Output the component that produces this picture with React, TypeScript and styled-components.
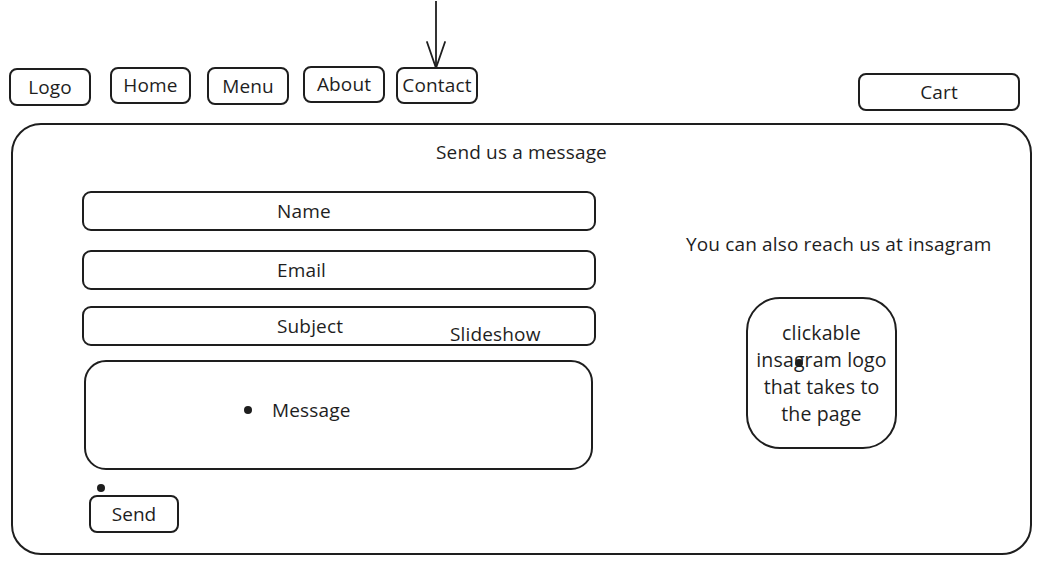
import React from 'react';
import styled, { createGlobalStyle } from 'styled-components';

const ink = '#1e1e1e';

const GlobalStyle = createGlobalStyle`
  body {
    margin: 0;
    background: #ffffff;
    color: ${ink};
    font-family: 'Open Sans', 'Noto Sans', sans-serif;
    font-size: 19px;
    letter-spacing: 0.15px;
  }
`;

// Header

const Header = styled.header`
  box-sizing: border-box;
  height: 123px;
  padding: 66px 21px 0 9px;
  display: flex;
  align-items: flex-start;
`;

const NavButton = styled.div<{ $w: number; $h: number; $left: number; $top: number }>`
  position: relative;
  box-sizing: border-box;
  width: ${(p) => p.$w}px;
  height: ${(p) => p.$h}px;
  margin-left: ${(p) => p.$left}px;
  margin-top: ${(p) => p.$top}px;
  border: 2px solid ${ink};
  border-radius: 8px;
  display: flex;
  align-items: center;
  justify-content: center;
  line-height: 1;
`;

const CartButton = styled(NavButton)`
  margin-left: auto;
`;

const Arrow = styled.svg`
  position: absolute;
  left: 28px;
  top: -68px;
`;

// Panel

const Panel = styled.main`
  box-sizing: border-box;
  width: 1021px;
  height: 432px;
  margin-left: 11px;
  border: 2px solid ${ink};
  border-radius: 30px;
  padding: 15px 0 0 69px;
`;

const Title = styled.h1`
  margin: 0 0 0 -69px;
  font-size: 19px;
  font-weight: 400;
  line-height: 24px;
  text-align: center;
`;

const Columns = styled.div`
  display: flex;
  margin-top: 27px;
`;

const FormColumn = styled.div`
  width: 514px;
  display: flex;
  flex-direction: column;
  align-items: flex-start;
`;

const Field = styled.div<{ $top: number }>`
  position: relative;
  box-sizing: border-box;
  width: 514px;
  height: 40px;
  margin-top: ${(p) => p.$top}px;
  border: 2px solid ${ink};
  border-radius: 9px;
  padding-left: 193px;
  display: flex;
  align-items: center;
`;

const StrayLabel = styled.span`
  position: absolute;
  left: 366px;
  top: 14px;
  line-height: 24px;
`;

const MessageBox = styled.div`
  box-sizing: border-box;
  width: 509px;
  height: 110px;
  margin: 14px 0 0 2px;
  border: 2px solid ${ink};
  border-radius: 22px;
  padding: 0 0 10px 158px;
  display: flex;
  align-items: center;
`;

const Bullet = styled.span<{ $gap?: number }>`
  display: inline-block;
  width: 8px;
  height: 8px;
  border-radius: 50%;
  background: ${ink};
  margin-right: ${(p) => p.$gap ?? 0}px;
`;

const SendDot = styled(Bullet)`
  margin: 14px 0 0 15px;
`;

const SendButton = styled.button`
  box-sizing: border-box;
  width: 90px;
  height: 38px;
  margin: 3px 0 0 7px;
  border: 2px solid ${ink};
  border-radius: 8px;
  background: none;
  color: ${ink};
  font: inherit;
  padding: 0;
`;

const SideColumn = styled.aside`
  margin-left: 90px;
  padding-top: 41px;
  display: flex;
  flex-direction: column;
  align-items: flex-start;
`;

const SideText = styled.p`
  margin: 0;
  line-height: 24px;
  white-space: nowrap;
`;

const InstaBox = styled.a`
  position: relative;
  box-sizing: border-box;
  width: 151px;
  height: 152px;
  margin: 41px 0 0 60px;
  border: 2px solid ${ink};
  border-radius: 34px;
  display: flex;
  align-items: center;
  justify-content: center;
  text-align: center;
  line-height: 27px;
  font-size: 19.5px;
  white-space: nowrap;
  color: ${ink};
  text-decoration: none;
`;

const InstaDot = styled(Bullet)`
  position: absolute;
  left: 47px;
  top: 60px;
`;

const navItems = [
  { label: 'Logo', w: 82, h: 38, left: 0, top: 2 },
  { label: 'Home', w: 81, h: 37, left: 19, top: 1 },
  { label: 'Menu', w: 82, h: 38, left: 16, top: 1 },
  { label: 'About', w: 82, h: 37, left: 14, top: 0 },
  { label: 'Contact', w: 82, h: 37, left: 11, top: 1 },
];

export default function App() {
  return (
    <>
      <GlobalStyle />
      <Header>
        {navItems.map((item) => (
          <NavButton key={item.label} $w={item.w} $h={item.h} $left={item.left} $top={item.top}>
            {item.label === 'Contact' && (
              <Arrow width="20" height="68" viewBox="0 0 20 68" fill="none" stroke={ink} strokeWidth="1.8" strokeLinecap="round">
                <path d="M10 0 L10 67" />
                <path d="M1 41 L10 67 L19 41" />
              </Arrow>
            )}
            {item.label}
          </NavButton>
        ))}
        <CartButton $w={162} $h={38} $left={0} $top={7}>
          Cart
        </CartButton>
      </Header>
      <Panel>
        <Title>Send us a message</Title>
        <Columns>
          <FormColumn>
            <Field $top={0}>Name</Field>
            <Field $top={19}>Email</Field>
            <Field $top={16}>
              Subject
              <StrayLabel>Slideshow</StrayLabel>
            </Field>
            <MessageBox>
              <Bullet $gap={20} />
              Message
            </MessageBox>
            <SendDot />
            <SendButton>Send</SendButton>
          </FormColumn>
          <SideColumn>
            <SideText>You can also reach us at insagram</SideText>
            <InstaBox href="#">
              <InstaDot />
              <span>
                clickable
                <br />
                insagram logo
                <br />
                that takes to
                <br />
                the page
              </span>
            </InstaBox>
          </SideColumn>
        </Columns>
      </Panel>
    </>
  );
}
